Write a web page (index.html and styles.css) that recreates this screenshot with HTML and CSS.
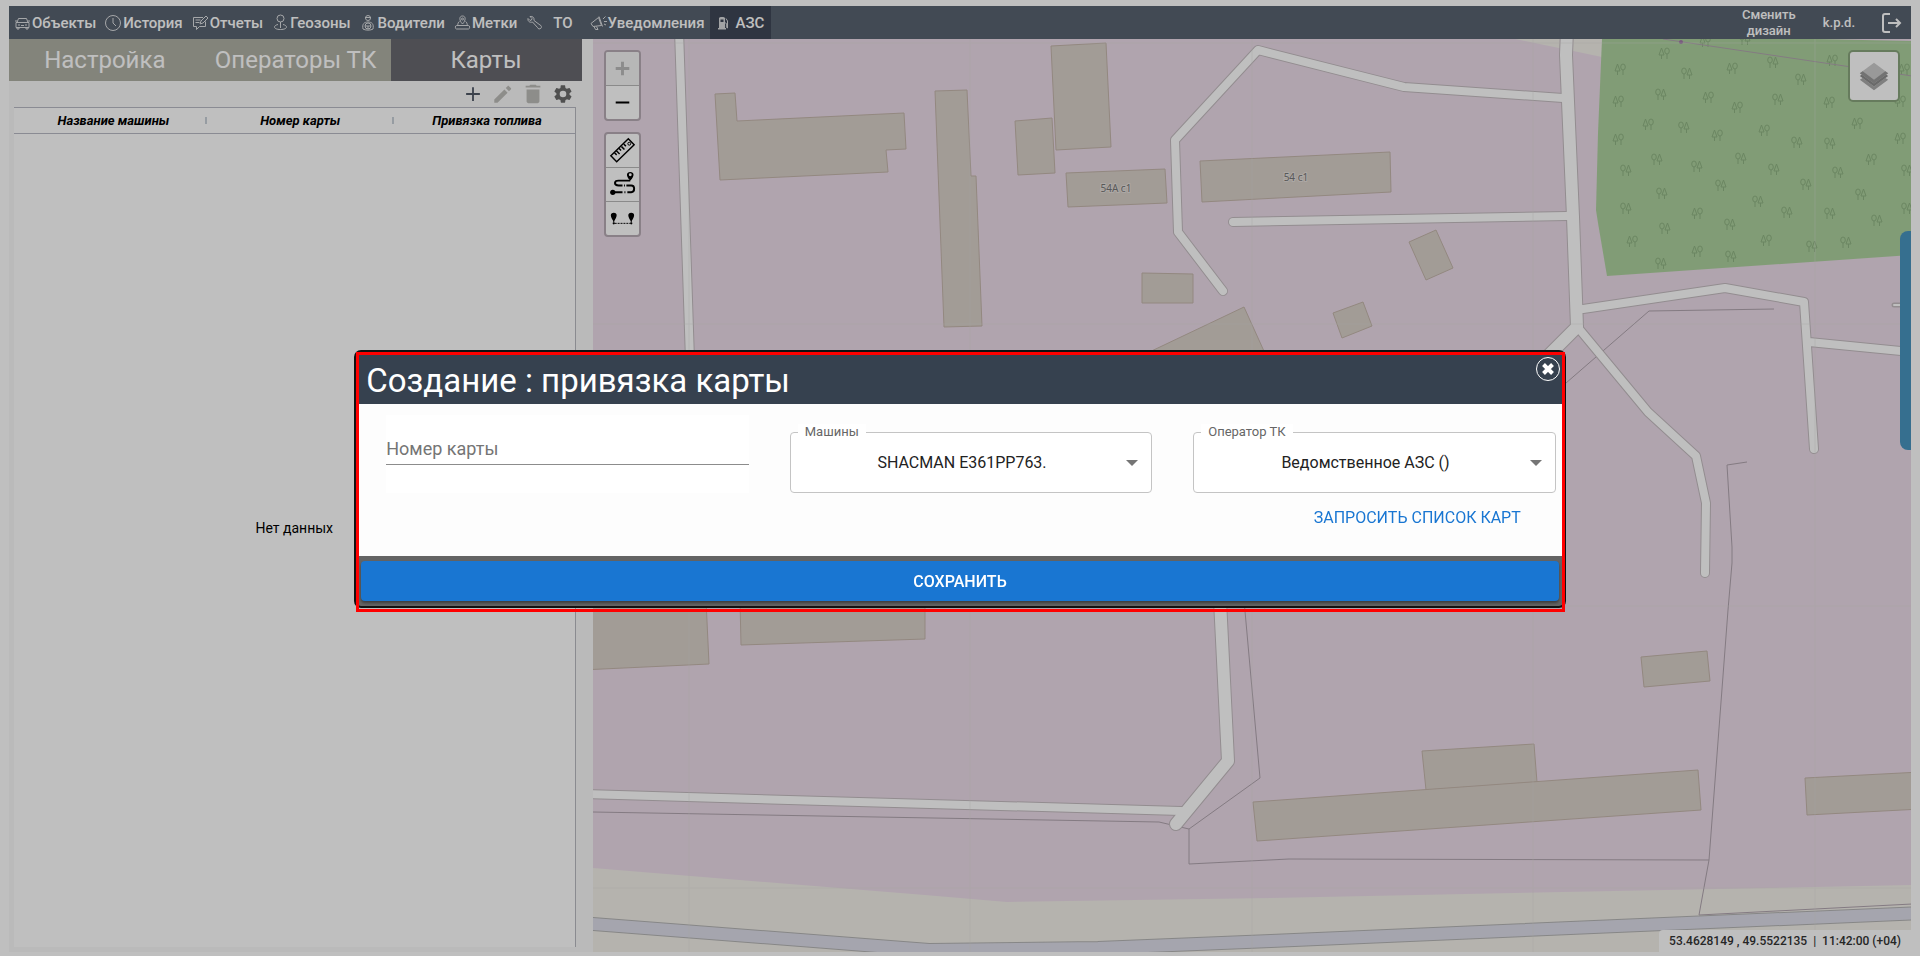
FILE: index.html
```html
<!DOCTYPE html>
<html lang="ru">
<head>
<meta charset="utf-8">
<title>Карты АЗС</title>
<link rel="stylesheet" href="styles.css">
</head>
<body>
<div class="app">
  <header class="topbar">
    <nav class="nav">
      <a class="nav-item" href="#objects"><svg class="ico" viewBox="0 0 18 18"><path d="M3 8.500 4.500 4.500h8L14 8.500M2 8.500h13v5H2zM1 7h2M14 7h2M3 13.500v1.500h2v-1.500M12 13.500v1.500h2v-1.500M4 11h2M11 11h2M7 11.500h3"/></svg>Объекты</a>
      <a class="nav-item" href="#history"><svg class="ico" viewBox="0 0 18 18"><circle cx="8" cy="9" r="7.500"/><path d="M8 4v5l3 3"/></svg>История</a>
      <a class="nav-item" href="#reports"><svg class="ico" viewBox="0 0 18 18"><path d="M11 3.500H1.500v9h3v3l3-3h6v-5M3.500 6h5M3.500 8.500h4M8 10l1-3 5-5 2 2-5 5z"/></svg>Отчеты</a>
      <a class="nav-item" href="#zones"><svg class="ico" viewBox="0 0 18 18"><circle cx="8.500" cy="4.500" r="3.500"/><path d="M8.500 8v6M6 10.500c-5 1-5 5 2.500 5s7.500-4 2.500-5"/></svg>Геозоны</a>
      <a class="nav-item" href="#drivers"><svg class="ico" viewBox="0 0 18 18"><circle cx="8" cy="4" r="2.500"/><path d="M5 3.500h6M3 15c-1-5 1-7 5-7s6 2 5 7c-2 1.500-8 1.500-10 0z"/><circle cx="8" cy="12" r="3"/><path d="M5 12h6M8 12v3"/></svg>Водители</a>
      <a class="nav-item" href="#marks"><svg class="ico" viewBox="0 0 18 18"><path d="M8.500 10C5 6.500 5 2 8.500 2s3.500 4.500 0 8zM5.500 7.500C4 8 4 10 3.500 11.500h10C13 10 13 8 11.500 7.500M2.500 11.500C1 11.500 1 15 2.500 15h12c1.500 0 1.500-3.500 0-3.500z"/><circle cx="8.500" cy="5" r="1"/></svg>Метки</a>
      <a class="nav-item nav-item-wide" href="#service"><svg class="ico" viewBox="0 0 18 18"><path d="M6.500 8l5 5.500a2 2 0 1 0 2.500-2.500L8 6.500C8.500 3.500 6.500 2 4 2.500l2 2-.5 1.500-1.500.5-2-2c-.5 2.500 1.500 4.500 4.500 3.500z"/></svg><span>ТО</span></a>
      <a class="nav-item" href="#alerts"><svg class="ico" viewBox="0 0 18 18"><path d="M1 9.500 8.500 3.500l3 8L3 12.500zM4 12.500l1.500 3H8l-1.500-3M9 2.500l3.500 10M13 5l2.500-2.500M14 7.500h3M14 10l2 1"/></svg>Уведомления</a>
      <a class="nav-item nav-active" href="#fuel"><svg class="ico" viewBox="0 0 18 18"><path d="M3 14V4c0-1.500 6-1.500 6 0v10h1v1.500H2V14z" fill="currentColor" stroke="none"/><path d="M4.500 5.500h3V8h-3z" fill="#3f4757" stroke="none"/><path d="M9 9c3-1 0 5 2.500 5V7L10 4.500"/></svg><span>АЗС</span></a>
    </nav>
    <div class="account">
      <a class="acc-design" href="#design">Сменить дизайн</a>
      <a class="acc-user" href="#user">k.p.d.</a>
      <button class="acc-exit" aria-label="Выход"><svg viewBox="0 0 20 20" width="20" height="20"><path d="M8 1H3q-2 0-2 2v14q0 2 2 2h5M6 10h12M14 6l4 4-4 4" fill="none" stroke="currentColor" stroke-width="2"/></svg></button>
    </div>
  </header>
  <main class="content">
    <section class="panel">
      <div class="tabs">
        <button class="tab">Настройка</button>
        <button class="tab">Операторы ТК</button>
        <button class="tab tab-active">Карты</button>
      </div>
      <div class="tools">
        <button aria-label="Добавить"><svg viewBox="0 0 24 24"><path d="M19.500 13H13v6.500h-2V13H4.500v-2H11V4.500h2V11h6.500z" fill="#505866"/></svg></button>
        <button aria-label="Изменить"><svg viewBox="0 0 24 24"><path d="M2.500 18v3.500H6L17 10.500 13.500 7zM20.500 7c.5-.5.5-1 0-1.500L18.500 3.500c-.5-.5-1-.5-1.500 0l-2 2L18.500 9z" fill="#bdbcb8"/></svg></button>
        <button aria-label="Удалить"><svg viewBox="0 0 24 24"><path d="M5 20c0 1 1 2 2 2h10c1 0 2-1 2-2V7H5zM20 3h-4l-1-1H9L8 3H4v2h16z" fill="#bdbcb8"/></svg></button>
        <button aria-label="Параметры"><svg viewBox="0 0 24 24"><path d="M19.100 12.900a7 7 0 0 0 0-1.800l2-1.600c.2-.1.300-.4.100-.6l-1.900-3.300c-.1-.2-.4-.3-.6-.2l-2.400 1a7 7 0 0 0-1.600-1l-.4-2.500c0-.2-.2-.4-.5-.4h-3.800c-.2 0-.4.200-.5.400l-.3 2.500c-.6.3-1.100.6-1.600 1l-2.400-1c-.2-.1-.5 0-.6.200L2.700 8.900c-.1.200-.1.500.1.600l2 1.600a7 7 0 0 0 0 1.800l-2 1.600c-.2.100-.2.400-.1.600l1.900 3.300c.1.200.4.300.6.200l2.400-1c.5.400 1 .7 1.600 1l.4 2.500c0 .2.200.4.400.4h3.900c.2 0 .4-.2.400-.4l.4-2.500c.6-.3 1.100-.6 1.600-1l2.400 1c.2.100.5 0 .6-.2l1.900-3.300c.1-.2.100-.5-.1-.6zM12 15.600a3.600 3.600 0 1 1 0-7.200 3.600 3.600 0 0 1 0 7.200z" fill="#6b6b6b"/></svg></button>
      </div>
      <div class="grid-box">
        <table class="cards">
          <thead><tr><th>Название машины</th><th>Номер карты</th><th>Привязка топлива</th></tr></thead>
        </table>
        <p class="empty">Нет данных</p>
      </div>
    </section>
    <section class="map">
      <svg class="map-canvas" viewBox="592 39 1319 913" preserveAspectRatio="xMinYMin slice">
        <defs>
          <g id="ta"><path d="M-5 2 -2.500-5 0 2zM-2.500 2v4M3 1v5"/><ellipse cx="3" cy="-2" rx="2.300" ry="3"/></g>
          <g id="tb"><path d="M5 2 2.500-5 0 2zM2.500 2v4M-3 1v5"/><ellipse cx="-3" cy="-2" rx="2.300" ry="3"/></g>
        </defs>
        <path class="industrial" d="M592 39H1911V885L1270 898 1006 902 924 895 592 868z"/>
        <path class="land" d="M1514 39 1601 57V39z"/>
        <path class="wood" d="M1601 39H1814L1911 41V255L1606 276 1597 223 1595 210 1597 133z"/>
        <g class="trees">
          <use href="#ta" x="1663" y="53"/><use href="#ta" x="1619" y="69"/><use href="#tb" x="1686" y="73"/><use href="#ta" x="1731" y="68"/><use href="#tb" x="1772" y="62"/><use href="#ta" x="1831" y="60"/><use href="#tb" x="1800" y="79"/><use href="#tb" x="1660" y="94"/><use href="#ta" x="1617" y="101"/><use href="#ta" x="1707" y="97"/><use href="#ta" x="1736" y="107"/><use href="#tb" x="1777" y="99"/><use href="#ta" x="1828" y="102"/><use href="#ta" x="1899" y="101"/><use href="#ta" x="1647" y="124"/><use href="#tb" x="1683" y="127"/><use href="#ta" x="1617" y="139"/><use href="#ta" x="1716" y="135"/><use href="#ta" x="1763" y="130"/><use href="#tb" x="1796" y="142"/><use href="#tb" x="1829" y="143"/><use href="#ta" x="1856" y="123"/><use href="#ta" x="1899" y="138"/><use href="#tb" x="1656" y="159"/><use href="#tb" x="1625" y="170"/><use href="#tb" x="1696" y="166"/><use href="#tb" x="1740" y="158"/><use href="#tb" x="1773" y="169"/><use href="#tb" x="1805" y="184"/><use href="#tb" x="1837" y="172"/><use href="#ta" x="1870" y="159"/><use href="#tb" x="1906" y="170"/><use href="#tb" x="1720" y="185"/><use href="#tb" x="1661" y="193"/><use href="#tb" x="1757" y="201"/><use href="#tb" x="1860" y="194"/><use href="#tb" x="1625" y="208"/><use href="#ta" x="1696" y="213"/><use href="#tb" x="1786" y="212"/><use href="#tb" x="1829" y="213"/><use href="#tb" x="1876" y="220"/><use href="#tb" x="1906" y="208"/><use href="#tb" x="1664" y="228"/><use href="#tb" x="1729" y="224"/><use href="#ta" x="1631" y="241"/><use href="#ta" x="1765" y="240"/><use href="#tb" x="1811" y="246"/><use href="#tb" x="1845" y="242"/><use href="#ta" x="1696" y="251"/><use href="#tb" x="1730" y="256"/><use href="#tb" x="1660" y="263"/><use href="#ta" x="1704" y="41"/><use href="#tb" x="1744" y="39"/><use href="#ta" x="1903" y="69"/>
        </g>
        <g class="thin">
          <path d="M1662 39 1911 76M1565 383 1648 311 1773 309M1746 462 1726 465 1731 547V563L1727 610 1708 860 1698 915 1911 904M592 812 1158 822 1188 829V864L1288 859 1708 860M1188 829 1259 778 1243 600"/>
        </g>
        <circle cx="1680" cy="42" r="2" fill="#a07aa8"/>
        <g class="buildings">
          <path d="M714 94 734 93 736 121 903 113 905 149 885 150 887 172 719 180z"/>
          <path d="M934 91 966 90 970 176H975L981 326 943 327z"/>
          <path d="M1050 46 1105 43 1110 147 1055 150z"/>
          <path d="M1014 121 1051 118 1054 173 1017 175z"/>
          <path d="M1065 173 1164 169 1166 203 1067 207z"/>
          <path d="M1141 273 1192 274V303H1141z"/>
          <path d="M1140 356 1243 307 1267 360z"/>
          <path d="M1199 161 1389 152 1390 192 1201 202z"/>
          <path d="M1408 242 1435 230 1452 268 1425 280z"/>
          <path d="M1332 313 1362 302 1371 326 1341 338z"/>
          <path d="M580 600H705L708 664 580 670z"/>
          <path d="M739 600 740 645 924 639V600z"/>
          <path d="M1640 657 1706 651 1709 681 1643 687z"/>
          <path d="M1421 751 1533 744 1536 782 1425 790z"/>
          <path d="M1252 802 1697 770 1700 810 1256 841z"/>
          <path d="M1804 778 1920 772V809L1806 815z"/>
        </g>
        <g class="casing">
          <path class="r8" d="M678 30 689 360M1222 291 1177 232 1174 140 1257 50 1403 87 1562 98M1232 222 1566 216M1579 330 1647 412 1695 456 1705 503 1704 573M1582 309 1724 288 1803 302 1813 449M1808 342 1920 353M580 794 1180 811"/>
          <path class="r12" d="M1566 30 1565 55 1572 217 1576 327 1545 358M1219 600 1227 761 1175 824"/>
          <path class="r4" d="M1893 305H1920"/>
        </g>
        <g class="road">
          <path class="r8" d="M678 30 689 360M1222 291 1177 232 1174 140 1257 50 1403 87 1562 98M1232 222 1566 216M1579 330 1647 412 1695 456 1705 503 1704 573M1582 309 1724 288 1803 302 1813 449M1808 342 1920 353M580 794 1180 811"/>
          <path class="r12" d="M1566 30 1565 55 1572 217 1576 327 1545 358M1219 600 1227 761 1175 824"/>
          <path class="r4" d="M1893 305H1920"/>
        </g>
        <path class="street-casing" d="M580 923 928 950 1097 948 1270 941 1920 913"/>
        <path class="street" d="M580 923 928 950 1097 948 1270 941 1920 913"/>
        <path class="seams" d="M688 39V952M969 39V952M1251 39V952M1532 39V952M1814 39V952M592 43H1911M592 324H1911M592 606H1911M592 888H1911"/>
        <g class="labels"><text x="1115" y="192">54А с1</text><text x="1295" y="181">54 с1</text></g>
      </svg>
      <div class="map-left">
        <div class="ctl">
          <button class="ctl-off" aria-label="Приблизить"><svg viewBox="0 0 34 34"><path d="M10 17h14M17 10v14" stroke="#bbb" stroke-width="3"/></svg></button>
          <button aria-label="Отдалить"><svg viewBox="0 0 34 34"><path d="M10 17h14" stroke="#000" stroke-width="2"/></svg></button>
        </div>
        <div class="ctl">
          <button aria-label="Линейка"><svg viewBox="0 0 34 34"><path d="M5 22.500 23 5l6 6-18 17.500zM9 19.500l2 2M11 17.500l3 3M13.500 15l2 2M16 13l3 3M18.500 10.500l2 2" fill="none" stroke="#000" stroke-width="1.500"/><circle cx="24" cy="10" r="1.500" fill="none" stroke="#000"/></svg></button>
          <button aria-label="Маршрут"><svg viewBox="0 0 34 34"><path fill-rule="evenodd" d="M25 13c-5-5-4-9 0-9s5 4 0 9zm0-7.500a1.500 1.500 0 1 0 0 3 1.500 1.500 0 0 0 0-3z"/><circle cx="7" cy="25" r="2.700"/><path d="M25 13H13c-5 0-5 5 0 5h4M21 18h5c4 0 4 7 0 7h-4M20 25h-1M17 25H8M18.500 18h1" fill="none" stroke="#000" stroke-width="2"/></svg></button>
          <button aria-label="Расстояние"><svg viewBox="0 0 34 34"><path d="M8 20c-4-5-4-9 0-9s4 4 0 9zM26 20c-4-5-4-9 0-9s4 4 0 9z"/><path d="M9 22h16" fill="none" stroke="#000" stroke-dasharray="2 1"/><path d="M8 18v3M26 18v3" stroke="#000"/><circle cx="8" cy="22" r="1.200"/><circle cx="26" cy="22" r="1.200"/></svg></button>
        </div>
      </div>
      <button class="layers" aria-label="Слои"><svg viewBox="0 0 36 36"><path d="M3 22 18 33 33 22 30 20 18 29 6 20z" fill="#aaa"/><path d="M3 18 18 29 33 18 30 16 18 25 6 16z" fill="#8c8c8c"/><path d="M3 15 18 26 33 15 18 4z" fill="#ccc"/><path d="M3 15 18 26 33 15 30 13 18 22 6 13z" fill="#999"/></svg></button>
      <div class="drawer"></div>
      <div class="status">53.4628149 , 49.5522135 &nbsp;|&nbsp; 11:42:00 (+04)</div>
    </section>
  </main>
</div>
<div class="backdrop">
  <div class="frame">
    <form class="dialog">
      <div class="dlg-head">
        <h1>Создание : привязка карты</h1>
        <button type="button" class="close" aria-label="Закрыть"><svg viewBox="0 0 26 26" width="26" height="26"><circle cx="13" cy="13" r="11.500" fill="none" stroke="#fff"/><path d="M8.500 8.500l9 9M17.500 8.500l-9 9" stroke="#fff" stroke-width="4"/></svg></button>
      </div>
      <div class="dlg-body">
        <div class="text-field"><input id="num" type="text" placeholder="Номер карты" aria-label="Номер карты"></div>
        <div class="select-field"><label for="car">Машины</label><select id="car"><option>SHACMAN E361PP763.</option></select></div>
        <div class="select-field"><label for="op">Оператор ТК</label><select id="op"><option>Ведомственное АЗС ()</option></select></div>
        <div class="request"><button type="button">ЗАПРОСИТЬ СПИСОК КАРТ</button></div>
      </div>
      <div class="dlg-foot"><button type="submit">СОХРАНИТЬ</button></div>
    </form>
  </div>
</div>
</body>
</html>
```
FILE: styles.css
```css
* { box-sizing: border-box; }
body {
  margin: 0;
  background: #fff;
  font-family: Roboto, "Noto Sans", sans-serif;
  font-size: 14px;
  color: #000;
}
button {
  font-family: inherit;
  border: 0;
  background: none;
  padding: 0;
  cursor: pointer;
}
a { color: inherit; text-decoration: none; }
.app {
  height: 100vh;
  padding: 6px 9px 4px;
  display: flex;
  flex-direction: column;
}
.topbar {
  flex: 0 0 33px;
  display: flex;
  justify-content: space-between;
  background: #596370;
  color: #fff;
}
.nav { display: flex; font-size: 15px; font-weight: 500; padding-left: 5px; }
.nav-item { display: flex; align-items: center; margin-right: 9px; white-space: nowrap; }
.ico {
  width: 18px;
  height: 18px;
  fill: none;
  stroke: currentColor;
  stroke-width: 1;
  opacity: .8;
}
.nav-item-wide span { padding: 0 8px 0 9px; }
.nav-active { background: #3f4757; margin: 0 0 0 -4px; padding: 0 7px 0 6px; }
.nav-active span { padding-left: 2px; }
.account { display: flex; align-items: center; font-size: 13px; font-weight: 500; padding-right: 9px; }
.acc-design { width: 70px; text-align: center; line-height: 16px; }
.acc-user { padding: 0 27px 0 19px; }
.acc-exit { color: #fff; display: flex; }

.content { flex: 1; min-height: 0; display: grid; grid-template-columns: 30.1% 1fr; column-gap: 11px; background: #f8f8f8; }
.panel { min-width: 0; display: flex; flex-direction: column; padding-bottom: 5px; }
.tabs { display: flex; height: 42px; background: #afb0a5; }
.tab { color: #fff; font-size: 24px; flex: 1 1 auto; padding: 0 13px 0 34px; white-space: nowrap; }
.tab-active { background: #69696f; flex: 0 0 191px; padding: 0; }
.tools { display: flex; justify-content: flex-end; gap: 6px; height: 26px; padding: 1px 7px 0 0; }
.tools button { width: 24px; height: 24px; }
.tools svg { width: 24px; height: 24px; display: block; padding: 1px; }
.grid-box {
  flex: 1;
  display: flex;
  flex-direction: column;
  margin: 0 6px 0 5px;
  background: #fff;
  border-right: 1px solid #b8bac0;
}
.cards { width: 100%; border-collapse: collapse; table-layout: fixed; }
.cards th {
  height: 26px;
  padding: 0 0 0 12px;
  border-top: 1px solid #b8bac4;
  border-bottom: 1px solid #b8bac4;
  font-size: 13px;
  font-weight: 700;
  font-style: italic;
}
.cards th + th { background: linear-gradient(#c8d0d8, #c8d0d8) 4px 50% / 2px 7px no-repeat; }
.empty { margin: auto; padding-bottom: 26px; }

.map { position: relative; min-width: 0; overflow: hidden; background: #f2efe9; }
.map-canvas { width: 100%; height: 100%; display: block; }
.industrial { fill: #ebdbe8; }
.land { fill: #f2efe9; }
.wood { fill: #add19e; }
.trees { fill: none; stroke: #8fb383; stroke-width: 1; }
.buildings { fill: #d9d0c9; stroke: #c4b6ab; stroke-width: 1; }
.thin { fill: none; stroke: #b0a4ae; stroke-width: 1; }
.casing, .road { fill: none; stroke-linecap: round; stroke-linejoin: round; }
.casing { stroke: #c4bcc0; }
.road { stroke: #fff; }
.casing .r8 { stroke-width: 10; }
.casing .r12 { stroke-width: 14; }
.casing .r4 { stroke-width: 5; }
.road .r8 { stroke-width: 8; }
.road .r12 { stroke-width: 12; }
.road .r4 { stroke-width: 2; }
.street-casing { fill: none; stroke: #b4b4b4; stroke-width: 14; }
.street { fill: none; stroke: #dddde8; stroke-width: 12; }
.seams { stroke: #dcdcd8; stroke-width: 1; opacity: .35; }
.labels {
  font-family: "Noto Sans", sans-serif;
  font-size: 10px;
  text-anchor: middle;
  fill: #777;
  stroke: #e6e0dc;
  stroke-width: 2;
  paint-order: stroke;
}
.map-left { position: absolute; left: 11px; top: 11px; display: flex; flex-direction: column; gap: 11px; }
.ctl { border: 2px solid #b7abb4; border-radius: 4px; overflow: hidden; background: #fff; display: flex; flex-direction: column; }
.ctl button { width: 33px; height: 34px; }
.ctl button:first-child { height: 33px; }
.ctl button + button { border-top: 1px solid #b9b9b9; }
.ctl svg { display: block; width: 100%; height: 100%; }
.ctl-off { background: #f4f4f4; }
.layers {
  position: absolute;
  right: 11px;
  top: 11px;
  width: 52px;
  height: 52px;
  border: 2px solid #89a57d;
  border-radius: 5px;
  background: #fff;
  display: grid;
  place-items: center;
}
.layers svg { width: 34px; height: 34px; }
.drawer { position: absolute; right: 0; top: 21%; width: 11px; height: 24%; background: #4994bf; border-radius: 8px 0 0 8px; }
.status {
  position: absolute;
  right: 0;
  bottom: 0;
  padding: 0 10px;
  line-height: 22px;
  font-size: 12px;
  font-weight: 500;
  color: #333;
  background: #fff;
  border-radius: 4px 0 0 0;
}

.backdrop {
  position: fixed;
  inset: 0;
  display: grid;
  place-items: center;
  background: rgba(0, 0, 0, .25);
}
.frame { position: relative; width: 63.1%; margin-top: 2px; }
.frame::after { content: ""; position: absolute; inset: 2px 1px -4px 2px; border: 3px solid #f00; pointer-events: none; }
.dialog { border: 2px solid #111; border-radius: 7px; overflow: hidden; background: #646464; }
.dlg-head { display: flex; justify-content: space-between; align-items: flex-start; height: 52px; background: #36414f; padding: 4px 3px 0 10px; }
.dlg-head h1 { margin: 0; font-size: 33px; line-height: 50px; font-weight: 400; color: #fff; }
.close { display: flex; }
.dlg-body {
  display: grid;
  grid-template-columns: repeat(3, 1fr);
  column-gap: 41px;
  padding: 11px 8px 11px 30px;
  background: #fdfdfd;
}
.text-field { height: 78px; background: #fff; padding-top: 16px; }
.text-field input {
  width: 100%;
  height: 34px;
  padding: 2px 0 0;
  border: 0;
  border-bottom: 1px solid #8c8c8c;
  background: none;
  font: 18px Roboto, "Noto Sans", sans-serif;
}
.text-field input::placeholder { color: #757575; opacity: 1; }
.select-field { position: relative; margin-top: 17px; height: 61px; }
.select-field::after {
  content: "";
  position: absolute;
  right: 14px;
  top: 28px;
  border: 6px solid transparent;
  border-top-color: #757575;
  pointer-events: none;
}
.select-field label { position: absolute; left: 8px; top: -8px; padding: 0 7px; background: #fff; font-size: 13px; line-height: 16px; color: #666; }
.select-field select {
  appearance: none;
  width: 100%;
  height: 100%;
  padding: 0 32px 0 14px;
  border: 1px solid #c4c4c4;
  border-radius: 4px;
  background: #fff;
  font: 16px Roboto, "Noto Sans", sans-serif;
  color: #222;
  text-align-last: center;
}
.request { grid-column: 3; height: 52px; text-align: right; padding: 13px 35px 0 0; }
.request button { font-size: 16px; line-height: 24px; color: #1976d2; }
.dlg-foot { padding: 5px 5px 5px; }
.dlg-foot button {
  width: 100%;
  height: 40px;
  border-radius: 4px;
  background: #1976d2;
  color: #fff;
  font-size: 16px;
  font-weight: 500;
  box-shadow: 0 2px 3px rgba(0, 0, 0, .4);
}
```
